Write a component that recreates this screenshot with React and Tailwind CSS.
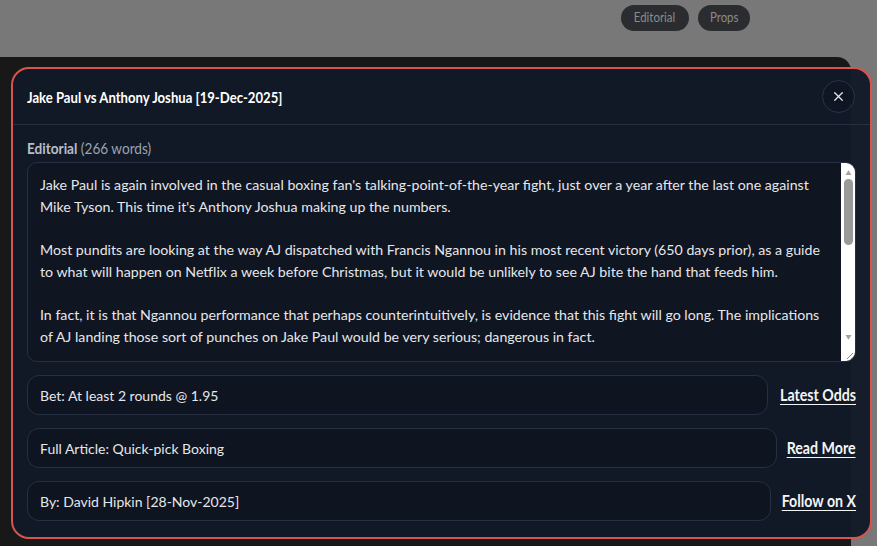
// Editorial modal over the picks page
import { X } from 'lucide-react';

const paragraphs = [
  "Jake Paul is again involved in the casual boxing fan's talking-point-of-the-year fight, just over a year after the last one against Mike Tyson. This time it's Anthony Joshua making up the numbers.",
  'Most pundits are looking at the way AJ dispatched with Francis Ngannou in his most recent victory (650 days prior), as a guide to what will happen on Netflix a week before Christmas, but it would be unlikely to see AJ bite the hand that feeds him.',
  'In fact, it is that Ngannou performance that perhaps counterintuitively, is evidence that this fight will go long. The implications of AJ landing those sort of punches on Jake Paul would be very serious; dangerous in fact.',
];

// link column widths match the condensed link text
const rows = [
  { text: 'Bet: At least 2 rounds @ 1.95', link: 'Latest Odds', w: 'w-[77px]' },
  { text: 'Full Article: Quick-pick Boxing', link: 'Read More', w: 'w-[68px]' },
  { text: 'By: David Hipkin [28-Nov-2025]', link: 'Follow on X', w: 'w-[74px]' },
];

export default function App() {
  return (
    <div className="relative h-[546px] w-[877px] overflow-hidden bg-[#787878] font-['Lato','Noto_Sans',sans-serif]">
      {/* ─── Page behind the overlay ─── */}
      <div className="flex h-[57px] justify-end gap-[9px] pr-[127px] pt-[5px]">
        <span className="flex h-[26px] w-[68px] items-center justify-center rounded-full bg-[#2a2c30] text-[13px] text-[#8b8b8b]">
          <span className="inline-block scale-x-[0.88]">Editorial</span>
        </span>
        <span className="flex h-[26px] w-[52px] items-center justify-center rounded-full bg-[#2a2c30] text-[13px] text-[#8b8b8b]">
          <span className="inline-block scale-x-[0.88]">Props</span>
        </span>
      </div>
      <div className="h-[489px] w-[851px] rounded-tr-[14px] bg-[#181818]" />

      {/* ─── Modal ─── */}
      <div className="absolute left-[11px] top-[67px] flex h-[472px] w-[861px] flex-col rounded-[18px] border-2 border-[#d9534f] bg-[#121a28]/[0.97] text-white">
        <div className="flex h-[56px] items-center justify-between border-b border-[#263042] pl-[14px] pr-[15px]">
          <h2 className="origin-left scale-x-[0.82] text-[16px] font-bold whitespace-nowrap text-white">
            Jake Paul vs Anthony Joshua [19-Dec-2025]
          </h2>
          <button type="button" className="flex h-[33px] w-[33px] items-center justify-center rounded-full border border-[#2a3446] bg-[#0f1522]">
            <X className="h-[15px] w-[15px] text-[#e5e7eb]" strokeWidth={2} />
          </button>
        </div>

        <div className="flex flex-1 flex-col px-[14px] pt-[13px]">
          <p className="origin-left scale-x-[0.85] whitespace-nowrap text-[16px] leading-[20px] text-[#9ca3af]">
            <span className="font-bold text-[#b8bec8]">Editorial</span> (266 words)
          </p>

          <div className="mt-[4px] flex h-[200px] overflow-hidden rounded-[10px] border border-[#263042] bg-[#0f1521]">
            <div className="flex-1 pl-[12px] pr-[20px] pt-[11px] text-[14.2px] leading-[21.7px] text-[#e5e7eb]">
              {paragraphs.map((p, i) => (
                <p key={i} className={i ? 'mt-[21.7px]' : ''}>{p}</p>
              ))}
            </div>
            <div className="flex w-[14px] flex-col items-center bg-white">
              <svg viewBox="0 0 10 10" className="mt-[6px] h-[6px] w-[9px]"><path d="M0 10 L5 2 L10 10Z" fill="#a3a3a3" /></svg>
              <div className="mt-[4px] h-[66px] w-[9px] rounded-full bg-[#9a9a9a]" />
              <div className="flex-1" />
              <svg viewBox="0 0 10 10" className="mb-[6px] h-[6px] w-[9px]"><path d="M0 0 L10 0 L5 8Z" fill="#a3a3a3" /></svg>
              <svg viewBox="0 0 14 14" className="h-[14px] w-[14px]"><path d="M12 6 L6 12 M12 10 L10 12" stroke="#888" strokeWidth="1" /></svg>
            </div>
          </div>

          <div className="mt-[13px] flex flex-col gap-[13px]">
            {rows.map((r) => (
              <div key={r.link} className="flex items-center gap-[11px]">
                <div className="flex h-[40px] flex-1 items-center rounded-[12px] border border-[#263042] bg-[#0e1420] px-[12px] text-[14px] text-[#e5e7eb]">
                  {r.text}
                </div>
                <div className={`${r.w} flex justify-end`}>
                  <a href="#" className="inline-block origin-right scale-x-[0.835] whitespace-nowrap text-[17px] font-bold text-[#f3f4f6] underline underline-offset-[3px]">
                    {r.link}
                  </a>
                </div>
              </div>
            ))}
          </div>
        </div>
      </div>
    </div>
  );
}
